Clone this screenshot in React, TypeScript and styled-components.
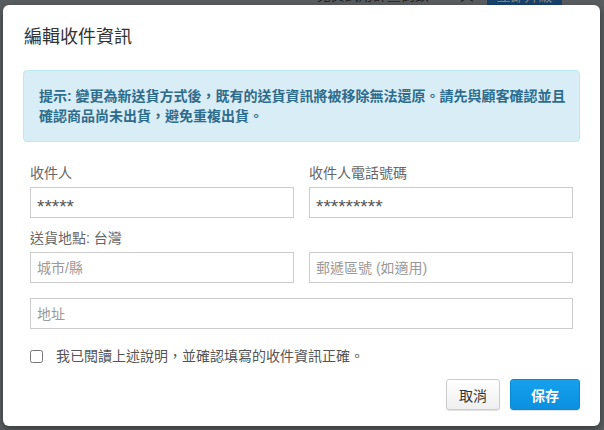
import React from "react";
import styled, { createGlobalStyle } from "styled-components";

const GlobalStyle = createGlobalStyle`
  html, body {
    margin: 0;
    padding: 0;
    width: 604px;
    height: 430px;
    overflow: hidden;
    font-family: "Liberation Sans", "Noto Sans CJK TC", sans-serif;
  }
  * { box-sizing: border-box; }
`;

const Page = styled.div`
  position: relative;
  width: 604px;
  height: 430px;
  background: #b4bcc2;
  overflow: hidden;
`;

const PageHeader = styled.div`
  display: flex;
  justify-content: flex-end;
  align-items: center;
  gap: 13px;
  height: 40px;
  margin-top: -25px;
  padding-right: 42px;
`;

const TrialText = styled.span`
  font-size: 14px;
  line-height: 20px;
  color: #444;
`;

const UpgradeButton = styled.span`
  display: inline-flex;
  align-items: center;
  justify-content: center;
  width: 75px;
  height: 30px;
  background: #2f86d8;
  color: #fff;
  font-size: 14px;
  border-radius: 3px;
`;

const Backdrop = styled.div`
  position: absolute;
  inset: 0;
  background: rgba(0, 0, 0, 0.5);
`;

const Modal = styled.div`
  position: absolute;
  left: 3px;
  top: 5px;
  width: 597px;
  height: 421px;
  background: #fff;
  border-radius: 6px;
  box-shadow: 0 3px 9px rgba(0, 0, 0, 0.4);
  display: flex;
  flex-direction: column;
`;

const Header = styled.div`
  padding: 20px 20px 20px 21px;
`;

const Title = styled.h4`
  margin: 0;
  font-size: 18px;
  line-height: 25px;
  font-weight: normal;
  color: #333;
`;

const Body = styled.div`
  padding: 0 20px;
  display: flex;
  flex-direction: column;
`;

const Alert = styled.div`
  background: #d9edf7;
  border: 1px solid #bce8f1;
  border-radius: 4px;
  padding: 15px 11px 15px 15px;
  color: #2d6c8c;
  font-size: 14px;
  line-height: 20px;
  font-weight: bold;
`;

const Form = styled.div`
  padding: 21px 7px 0;
  display: flex;
  flex-direction: column;
`;

const Row = styled.div`
  display: grid;
  grid-template-columns: 1fr 1fr;
  column-gap: 15px;
`;

const Field = styled.div`
  display: flex;
  flex-direction: column;
`;

const Label = styled.div<{ $mt?: number }>`
  font-size: 14px;
  line-height: 20px;
  color: #666;
  margin-top: ${(p) => p.$mt ?? 0}px;
  margin-bottom: 4px;
`;

const Input = styled.input<{ $masked?: boolean }>`
  width: 100%;
  height: 31px;
  border: 1px solid #ccc;
  border-radius: 0;
  padding: ${(p) => (p.$masked ? "8px 6px 0" : "0 6px")};
  font-family: inherit;
  font-size: ${(p) => (p.$masked ? 19 : 14)}px;
  color: #555;
  background: #fff;
  outline: none;
  &::placeholder {
    color: #999;
  }
`;

const FullInput = styled(Input)`
  margin-top: 15px;
`;

const CheckRow = styled.label`
  display: flex;
  align-items: center;
  gap: 13px;
  margin-top: 17px;
  font-size: 14px;
  line-height: 20px;
  color: #555;
`;

const Check = styled.input`
  margin: 0;
  width: 13px;
  height: 13px;
`;

const Footer = styled.div`
  display: flex;
  justify-content: flex-end;
  gap: 10px;
  padding: 13px 20px 15px;
`;

const Button = styled.button<{ $primary?: boolean }>`
  height: 31px;
  padding: 0 ${(p) => (p.$primary ? 20 : 12)}px;
  font-family: inherit;
  font-size: 14px;
  border-radius: 3px;
  border: 1px solid ${(p) => (p.$primary ? "#0b8ad4" : "#ccc")};
  background: ${(p) =>
    p.$primary
      ? "linear-gradient(#16a0ec, #0a90de)"
      : "linear-gradient(#ffffff, #efefef)"};
  color: ${(p) => (p.$primary ? "#fff" : "#333")};
  font-weight: ${(p) => (p.$primary ? "bold" : "normal")};
  box-shadow: 0 1px 1px rgba(0, 0, 0, 0.12);
`;

export default function App() {
  return (
    <>
      <GlobalStyle />
      <Page>
        <PageHeader>
          <TrialText>免費試用計畫倒數 543 天</TrialText>
          <UpgradeButton>立即升級</UpgradeButton>
        </PageHeader>
        <Backdrop />
        <Modal>
          <Header>
            <Title>編輯收件資訊</Title>
          </Header>
          <Body>
            <Alert>
              提示: 變更為新送貨方式後，既有的送貨資訊將被移除無法還原。請先與顧客確認並且確認商品尚未出貨，避免重複出貨。
            </Alert>
            <Form>
              <Row>
                <Field>
                  <Label>收件人</Label>
                  <Input $masked defaultValue="*****" />
                </Field>
                <Field>
                  <Label>收件人電話號碼</Label>
                  <Input $masked defaultValue="*********" />
                </Field>
              </Row>
              <Label $mt={10}>送貨地點: 台灣</Label>
              <Row>
                <Input placeholder="城市/縣" />
                <Input placeholder="郵遞區號 (如適用)" />
              </Row>
              <FullInput placeholder="地址" />
              <CheckRow>
                <Check type="checkbox" />
                我已閱讀上述說明，並確認填寫的收件資訊正確。
              </CheckRow>
            </Form>
          </Body>
          <Footer>
            <Button>取消</Button>
            <Button $primary>保存</Button>
          </Footer>
        </Modal>
      </Page>
    </>
  );
}
